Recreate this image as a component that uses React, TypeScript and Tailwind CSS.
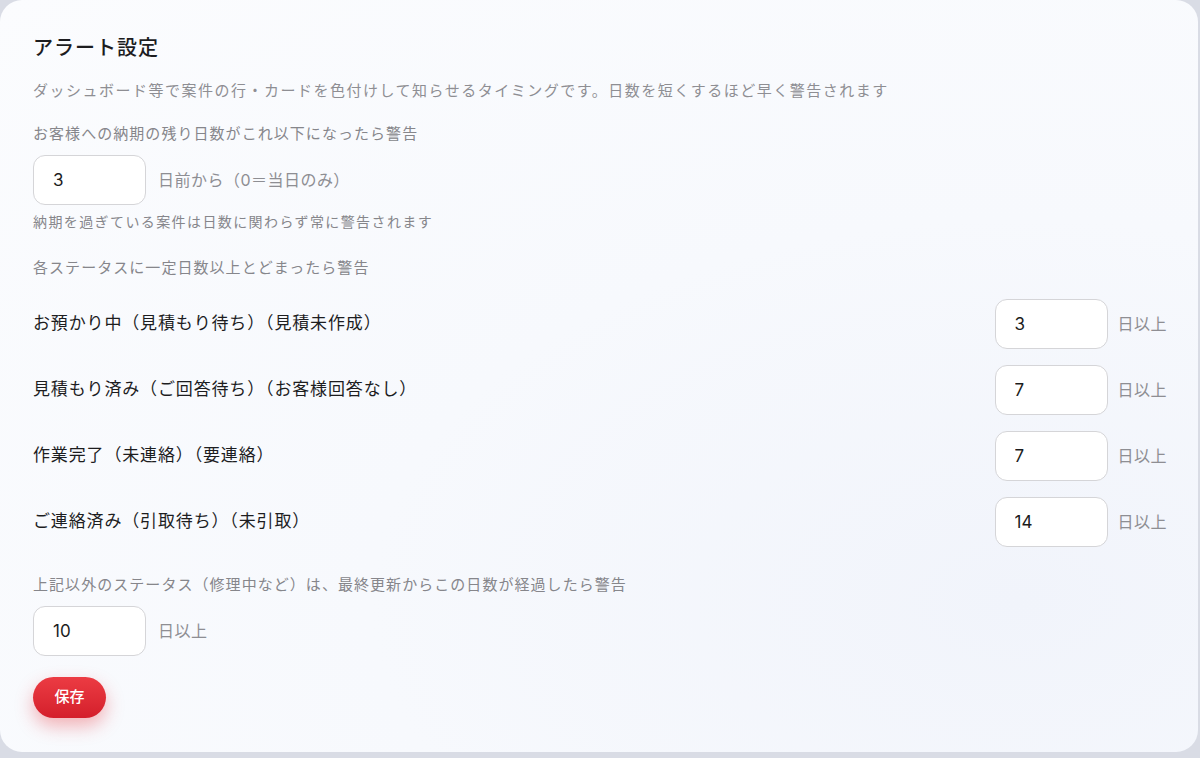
import React from "react";

const FONT = { fontFamily: '"Inter", "Noto Sans CJK JP", "Noto Sans", sans-serif' };

const STATUS_ROWS = [
  { label: "お預かり中（見積もり待ち）（見積未作成）", days: "3" },
  { label: "見積もり済み（ご回答待ち）（お客様回答なし）", days: "7" },
  { label: "作業完了（未連絡）（要連絡）", days: "7" },
  { label: "ご連絡済み（引取待ち）（未引取）", days: "14" },
];

function DaysInput({ value }: { value: string }) {
  return (
    <input
      readOnly
      value={value}
      className="h-[50px] w-[113px] shrink-0 rounded-[12px] border border-[#d5d5d8] bg-white pl-[19px] text-[17px] text-[#1c1c1c] outline-none"
      style={FONT}
    />
  );
}

function Suffix({ children }: { children: React.ReactNode }) {
  return <span className="text-[16px] tracking-[0.03em] text-[#8e8e93]">{children}</span>;
}

export default function App() {
  return (
    <div className="h-[758px] w-[1200px] overflow-hidden bg-[#d9dce5]" style={FONT}>
      <div className="h-[752px] w-[1198px] rounded-[22px] bg-[radial-gradient(ellipse_at_85%_80%,#f1f4fb_0%,#f7f9fd_45%,#fbfcfe_100%)] px-[33px] pt-[34px]">
        <h1 className="text-[20px] font-medium leading-[28px] tracking-[0.05em] text-[#1d1d1f]">アラート設定</h1>
        <p className="mt-[18px] text-[15px] leading-[22px] tracking-[0.1em] text-[#8e8e93]">
          ダッシュボード等で案件の行・カードを色付けして知らせるタイミングです。日数を短くするほど早く警告されます
        </p>

        <p className="mt-[21px] text-[15px] leading-[22px] tracking-[0.07em] text-[#86868b]">
          お客様への納期の残り日数がこれ以下になったら警告
        </p>
        <div className="mt-[10px] flex items-center gap-[12px]">
          <DaysInput value="3" />
          <Suffix>日前から（0＝当日のみ）</Suffix>
        </div>
        <p className="mt-[7px] text-[14px] leading-[20px] tracking-[0.1em] text-[#86868b]">
          納期を過ぎている案件は日数に関わらず常に警告されます
        </p>

        <p className="mt-[25px] text-[15px] leading-[22px] tracking-[0.07em] text-[#86868b]">
          各ステータスに一定日数以上とどまったら警告
        </p>
        <div className="mt-[20px] flex flex-col gap-[16px]">
          {STATUS_ROWS.map((row) => (
            <div key={row.label} className="flex items-center">
              <span className="flex-1 text-[17px] tracking-[0.05em] text-[#1d1d1f]">{row.label}</span>
              <DaysInput value={row.days} />
              <span className="ml-[10px] mr-[-2px]">
                <Suffix>日以上</Suffix>
              </span>
            </div>
          ))}
        </div>

        <p className="mt-[27px] text-[15px] leading-[22px] tracking-[0.07em] text-[#86868b]">
          上記以外のステータス（修理中など）は、最終更新からこの日数が経過したら警告
        </p>
        <div className="mt-[10px] flex items-center gap-[12px]">
          <DaysInput value="10" />
          <Suffix>日以上</Suffix>
        </div>

        <button className="mt-[21px] h-[41px] w-[73px] rounded-full bg-gradient-to-b from-[#ec3b43] to-[#d41e2b] text-[15px] font-medium text-white shadow-[0_8px_18px_rgba(230,40,50,0.35)]">
          保存
        </button>
      </div>
    </div>
  );
}
